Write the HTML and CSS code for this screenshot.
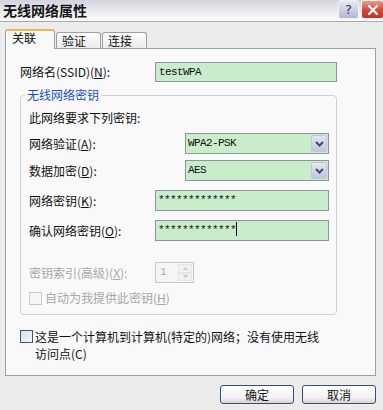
FILE: index.html
```html
<!DOCTYPE html>
<html lang="zh-CN">
<head>
    <meta charset="UTF-8">
    <title>无线网络属性</title>
    <link rel="stylesheet" href="styles.css">
</head>
<body>
    <div class="dialog">
        <!-- title bar with the help and close buttons -->
        <div class="titlebar">
            <span class="title">无线网络属性</span>
            <span class="cap-btn help">?</span>
            <span class="cap-btn close">
                <svg width="12" height="12" viewBox="0 0 12 12"><path d="M2 2 L10 10 M10 2 L2 10" stroke="#fff" stroke-width="2.2" stroke-linecap="round"/></svg>
            </span>
        </div>

        <div class="tabs">
            <span class="tab active">关联</span>
            <span class="tab">验证</span>
            <span class="tab">连接</span>
        </div>

        <div class="panel">
            <div class="row ssid-row">
                <span class="lbl lbl-ssid">网络名(SSID)(<u>N</u>):</span>
                <div class="field ssid-field">testWPA</div>
            </div>

            <fieldset class="group">
                <legend>无线网络密钥</legend>
                <p class="note">此网络要求下列密钥:</p>

                <div class="row">
                    <span class="lbl lbl-wide">网络验证(<u>A</u>):</span>
                    <div class="field select">
                        <span class="select-text">WPA2-PSK</span>
                        <span class="drop-btn"><svg width="9" height="6" viewBox="0 0 9 6"><path d="M1 1 L4.5 4.5 L8 1" fill="none" stroke="#3b4c72" stroke-width="2"/></svg></span>
                    </div>
                </div>
                <div class="row row-gap-s">
                    <span class="lbl lbl-wide">数据加密(<u>D</u>):</span>
                    <div class="field select">
                        <span class="select-text">AES</span>
                        <span class="drop-btn"><svg width="9" height="6" viewBox="0 0 9 6"><path d="M1 1 L4.5 4.5 L8 1" fill="none" stroke="#3b4c72" stroke-width="2"/></svg></span>
                    </div>
                </div>

                <div class="row row-gap-m">
                    <span class="lbl lbl-key">网络密钥(<u>K</u>):</span>
                    <div class="field key-field">*************</div>
                </div>
                <div class="row row-gap-m">
                    <span class="lbl lbl-key">确认网络密钥(<u>O</u>):</span>
                    <div class="field key-field">*************<span class="caret"></span></div>
                </div>

                <div class="row row-gap-l disabled">
                    <span class="lbl lbl-key">密钥索引(高级)(<u>X</u>):</span>
                    <div class="spinner">
                        <span class="spin-text">1</span>
                        <span class="spin-btns">
                            <span class="spin-half"><svg width="5" height="3" viewBox="0 0 5 3"><path d="M0 3 L2.5 0 L5 3Z" fill="#c4c8cc"/></svg></span>
                            <span class="spin-half"><svg width="5" height="3" viewBox="0 0 5 3"><path d="M0 0 L2.5 3 L5 0Z" fill="#c4c8cc"/></svg></span>
                        </span>
                    </div>
                </div>

                <div class="check-row disabled">
                    <span class="checkbox checkbox-off"></span>
                    <span>自动为我提供此密钥(<u>H</u>)</span>
                </div>
            </fieldset>

            <div class="adhoc">
                <span class="checkbox"></span>
                <span class="adhoc-text">这是一个计算机到计算机(特定的)网络；没有使用无线<br>访问点(C)</span>
            </div>
        </div>

        <div class="actions">
            <span class="btn">确定</span>
            <span class="btn">取消</span>
        </div>
    </div>
</body>
</html>
```

FILE: styles.css
```css
* {
    box-sizing: border-box;
}

body {
    margin: 0;
    font-family: "Noto Sans CJK SC", sans-serif;
    font-size: 12px;
    line-height: 14px;
    color: #111;
}

.dialog {
    width: 383px;
    height: 410px;
    overflow: hidden;
    background: #ececec;
}

/* title bar */
.titlebar {
    display: flex;
    height: 22px;
    border-bottom: 1px solid #aaabb0;
    background: linear-gradient(to bottom, #d2d3dc, #eeeff3 60%, #fbfbfc);
}

.title {
    padding-left: 3px;
    font-size: 14px;
    font-weight: bold;
    line-height: 20px;
    color: #151515;
}

.cap-btn {
    display: flex;
    align-items: center;
    justify-content: center;
    height: 19px;
    border: 1px solid #f2f2f6;
    border-radius: 3px;
}

.help {
    width: 21px;
    margin-left: auto;
    background: linear-gradient(to bottom, #e6e8f2, #b2b7d4);
    color: #2c3766;
    font-family: "DejaVu Sans", sans-serif;
    font-size: 13px;
}

.close {
    width: 23px;
    margin-left: 2px;
    margin-right: -1px;
    background: linear-gradient(to bottom, #ec9a86, #d2473a 55%, #bf3528);
}

/* tabs */
.tabs {
    display: flex;
    align-items: flex-end;
    margin-top: 7px;
    padding-left: 5px;
}

.tab {
    height: 16px;
    width: 46px;
    padding: 1px 0 0 4px;
    border: 1px solid #9aa0a6;
    border-bottom: none;
    border-radius: 3px 3px 0 0;
    background: linear-gradient(to bottom, #fdfdfd, #ececec);
}

.tab + .tab {
    margin-left: 1px;
    width: 45px;
    padding-left: 5px;
}

.tab.active {
    position: relative;
    z-index: 1;
    width: 50px;
    height: 20px;
    margin-bottom: -1px;
    padding: 0 0 0 6px;
    border-top: 2px solid #f2b44e;
    background: #f9f9f9;
}

/* tab page */
.panel {
    width: 371px;
    height: 328px;
    margin-left: 5px;
    border: 1px solid #9aa0a6;
    background: #f9f9f9;
}

.row {
    display: flex;
    align-items: center;
    height: 21px;
    margin-top: 8px;
}

.row-gap-s {
    margin-top: 6px;
}

.row-gap-m {
    margin-top: 9px;
}

.row-gap-l {
    margin-top: 21px;
}

.ssid-row {
    height: 20px;
    margin: 13px 0 0 14px;
}

.lbl {
    flex: none;
}

.lbl-ssid {
    width: 135px;
}

.lbl-wide {
    width: 156px;
}

.lbl-key {
    width: 126px;
}

.field {
    height: 100%;
    border: 1px solid #8f9597;
    background: #c9ecca;
    font-family: "Liberation Mono", monospace;
    font-size: 11px;
    letter-spacing: -0.6px;
    line-height: 18px;
    padding-left: 3px;
    color: #111;
}

.ssid-field {
    width: 182px;
}

.key-field {
    width: 174px;
    padding-left: 2px;
}

.caret {
    display: inline-block;
    width: 1px;
    height: 14px;
    vertical-align: -3px;
    background: #000;
}

.select {
    display: flex;
    width: 144px;
    padding: 1px;
}

.select-text {
    flex: 1;
    padding-left: 1px;
    line-height: 17px;
}

.drop-btn {
    display: flex;
    align-items: center;
    justify-content: center;
    width: 16px;
    border: 1px solid #c3c6d6;
    border-radius: 2px;
    background: linear-gradient(to bottom, #e4e6f0, #c3c7dc);
}

/* group box */
.group {
    width: 317px;
    margin: 6px 0 0 14px;
    padding: 0 0 9px 8px;
    border: 1px solid #d0d0cc;
    border-radius: 4px;
}

.group legend {
    margin-left: -4px;
    padding: 0 2px;
    color: #1d50bf;
}

.note {
    margin: 9px 0 0;
}

.disabled {
    color: #a7a7a7;
}

.spinner {
    display: flex;
    width: 39px;
    height: 100%;
    border: 1px solid #c9c8c0;
    background: #f5f5f5;
    padding: 1px;
}

.spin-text {
    flex: 1;
    padding-left: 3px;
    font-family: "Liberation Mono", monospace;
    font-size: 11px;
    line-height: 17px;
    color: #a9a9a9;
}

.spin-btns {
    display: flex;
    flex-direction: column;
    width: 14px;
}

.spin-half {
    flex: 1;
    display: flex;
    align-items: center;
    justify-content: center;
    border: 1px solid #e4e6e8;
    background: #f1f2f3;
}

.check-row {
    display: flex;
    align-items: center;
    gap: 3px;
    margin-top: 8px;
}

.checkbox {
    flex: none;
    width: 13px;
    height: 13px;
    border: 1px solid #3c5878;
    background: linear-gradient(135deg, #d6e0e8, #f6f8fa);
}

.checkbox-off {
    border-color: #cac9bf;
    background: #f6f6f6;
}

/* the ad-hoc option wraps onto two lines */
.adhoc {
    display: flex;
    align-items: flex-start;
    gap: 2px;
    margin: 13px 0 0 14px;
    line-height: 17px;
}

.adhoc .checkbox {
    margin-top: 2px;
}

/* dialog buttons */
.actions {
    display: flex;
    justify-content: flex-end;
    gap: 8px;
    margin-top: 9px;
    padding-right: 7px;
}

.btn {
    width: 74px;
    height: 19px;
    border: 1px solid #34507a;
    border-radius: 3px;
    background: linear-gradient(to bottom, #ffffff, #f1f1f3 70%, #d8d4cc);
    text-align: center;
    line-height: 17px;
}
```
